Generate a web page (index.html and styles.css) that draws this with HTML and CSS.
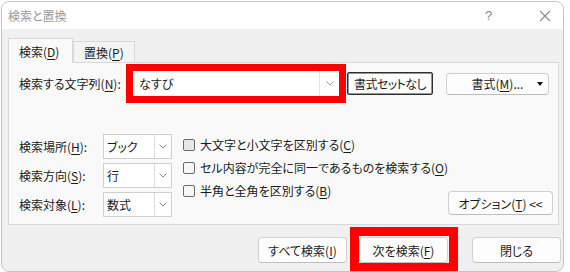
FILE: index.html
```html
<!DOCTYPE html>
<html lang="ja">

<head>
    <meta charset="UTF-8">
    <meta name="viewport" content="width=device-width, initial-scale=1.0">
    <title>検索と置換</title>
    <link rel="stylesheet" href="styles.css">
</head>

<body>
    <div class="window">
        <div class="titlebar">
            <span class="title">検索と置換</span>
            <span class="help">?</span>
            <span class="close">
                <svg width="12" height="12" viewBox="0 0 12 12"><path d="M1 1L11 11M11 1L1 11" stroke="#8a8a8a" stroke-width="1.1" fill="none"/></svg>
            </span>
        </div>

        <div class="content">
            <div class="tabs">
                <div class="tab active">検索(<u>D</u>)</div>
                <div class="tab">置換(<u>P</u>)</div>
            </div>

            <div class="panel">
                <div class="find-row">
                    <label class="find-label">検索する文字列(<u>N</u>):</label>
                    <div class="mark mark-input">
                        <div class="combo combo-find">
                            <span class="combo-value">なすび</span>
                            <span class="combo-arrow">
                                <svg width="8" height="5" viewBox="0 0 8 5"><path d="M0.5 0.5L4 4L7.5 0.5" stroke="#9a9a9a" fill="none"/></svg>
                            </span>
                        </div>
                    </div>
                    <button class="btn btn-focus">書式セットなし</button>
                    <button class="btn btn-format">
                        <span></span>
                        <span>書式(<u>M</u>)...</span>
                        <span class="tri"></span>
                    </button>
                </div>

                <div class="options">
                    <div class="selects">
                        <div class="select-row">
                            <label class="select-label">検索場所(<u>H</u>):</label>
                            <div class="combo combo-small">
                                <span class="combo-value">ブック</span>
                                <span class="combo-arrow">
                                    <svg width="8" height="5" viewBox="0 0 8 5"><path d="M0.5 0.5L4 4L7.5 0.5" stroke="#8a8a8a" fill="none"/></svg>
                                </span>
                            </div>
                        </div>
                        <div class="select-row">
                            <label class="select-label">検索方向(<u>S</u>):</label>
                            <div class="combo combo-small">
                                <span class="combo-value">行</span>
                                <span class="combo-arrow">
                                    <svg width="8" height="5" viewBox="0 0 8 5"><path d="M0.5 0.5L4 4L7.5 0.5" stroke="#8a8a8a" fill="none"/></svg>
                                </span>
                            </div>
                        </div>
                        <div class="select-row">
                            <label class="select-label">検索対象(<u>L</u>):</label>
                            <div class="combo combo-small">
                                <span class="combo-value">数式</span>
                                <span class="combo-arrow">
                                    <svg width="8" height="5" viewBox="0 0 8 5"><path d="M0.5 0.5L4 4L7.5 0.5" stroke="#8a8a8a" fill="none"/></svg>
                                </span>
                            </div>
                        </div>
                    </div>

                    <div class="checks">
                        <label class="check-row"><span class="box box-hover"></span>大文字と小文字を区別する(<u>C</u>)</label>
                        <label class="check-row"><span class="box"></span>セル内容が完全に同一であるものを検索する(<u>O</u>)</label>
                        <label class="check-row"><span class="box"></span>半角と全角を区別する(<u>B</u>)</label>
                    </div>

                    <button class="btn btn-option">オプション(<u>T</u>) &lt;&lt;</button>
                </div>
            </div>

            <div class="footer">
                <button class="btn btn-foot">すべて検索(<u>I</u>)</button>
                <div class="mark mark-button">
                    <button class="btn btn-foot">次を検索(<u>F</u>)</button>
                </div>
                <button class="btn btn-foot btn-close">閉じる</button>
            </div>
        </div>
    </div>
</body>

</html>
```

FILE: styles.css
```css
body {
    margin: 0;
    height: 272px;
    overflow: hidden;
    background-color: #ffffff;
    font-family: "Noto Sans CJK JP", "Noto Sans", sans-serif;
    font-size: 12px;
    font-feature-settings: "palt";
    color: #1a1a1a;
}

u {
    text-decoration-thickness: 1px;
    text-underline-offset: 2px;
}

.window {
    margin: 1px 0 0 1px;
    width: 563px;
    height: 271px;
    box-sizing: border-box;
    border: 1px solid #c4c4c4;
    border-radius: 8px;
    background-color: #f0f0f0;
    overflow: hidden;
}

.titlebar {
    height: 27px;
    display: flex;
    align-items: center;
    background-color: #ffffff;
    padding-left: 6px;
    color: #9a9a9a;
}

.title {
    flex: 1;
}

.help {
    width: 12px;
    margin-right: 42px;
    font-family: "Liberation Sans", sans-serif;
    font-size: 13px;
    color: #8a8a8a;
}

.close {
    width: 12px;
    height: 12px;
    margin-right: 12px;
    display: flex;
}

.content {
    padding: 9px 0 0 6px;
}

/* tabs */
.tabs {
    display: flex;
    align-items: flex-end;
    height: 24px;
}

.tab {
    box-sizing: border-box;
    height: 21px;
    padding: 0 10px;
    display: flex;
    align-items: center;
    border: 1px solid #d9d9d9;
    border-bottom: none;
    background-color: #f4f4f4;
}

.tab.active {
    height: 25px;
    width: 65px;
    margin-bottom: -1px;
    padding-left: 10px;
    background-color: #f9f9f9;
    position: relative;
    z-index: 1;
}

.panel {
    margin-right: 4px;
    box-sizing: border-box;
    height: 163px;
    border: 1px solid #d9d9d9;
    background-color: #f9f9f9;
    padding: 1px 8px 0 10px;
}

/* find row */
.find-row {
    display: flex;
    align-items: center;
}

.find-label {
    width: 107px;
    white-space: nowrap;
}

.mark {
    border: solid #ff0000;
}

.mark-input {
    border-width: 7px;
}

.combo {
    box-sizing: border-box;
    display: flex;
    align-items: center;
    background-color: #ffffff;
}

.combo-find {
    width: 206px;
    height: 25px;
}

.combo-find .combo-value {
    flex: 1;
    padding-left: 6px;
}

.combo-find .combo-arrow {
    width: 19px;
    height: 100%;
    border-left: 1px solid #e4e4e4;
    display: flex;
    align-items: center;
    justify-content: center;
}

.btn {
    box-sizing: border-box;
    font-family: inherit;
    font-size: 12px;
    font-feature-settings: "palt";
    color: #1a1a1a;
    background-color: #fdfdfd;
    border: 1px solid #d0d0d0;
    border-bottom-color: #bdbdbd;
    border-radius: 4px;
    padding: 0;
    white-space: nowrap;
    cursor: pointer;
}

.btn-focus {
    margin-left: 1px;
    width: 86px;
    height: 23px;
    border: 1px solid #2e2e2e;
    border-radius: 2px;
    box-shadow: inset 0 0 0 0.5px #2e2e2e;
    letter-spacing: -0.6px;
}

.btn-format {
    margin-left: 13px;
    width: 103px;
    height: 22px;
    display: grid;
    grid-template-columns: 1fr auto 1fr;
    align-items: center;
}

.tri {
    justify-self: end;
    margin-right: 5px;
    width: 0;
    height: 0;
    border-left: 3.5px solid transparent;
    border-right: 3.5px solid transparent;
    border-top: 4px solid #111111;
}

/* options */
.options {
    margin-top: 31px;
    display: flex;
}

.selects {
    flex-shrink: 0;
    display: flex;
    flex-direction: column;
    gap: 4px;
}

.select-row {
    display: flex;
    align-items: center;
}

.select-label {
    width: 84px;
    white-space: nowrap;
}

.combo-small {
    width: 69px;
    height: 25px;
    border: 1px solid #cfcfcf;
}

.combo-small .combo-value {
    flex: 1;
    padding-left: 3px;
}

.combo-small .combo-arrow {
    width: 16px;
    height: 100%;
    border-left: 1px solid #dcdcdc;
    display: flex;
    align-items: center;
    justify-content: center;
}

.checks {
    flex-shrink: 0;
    margin-left: 11px;
    margin-top: -1px;
    display: flex;
    flex-direction: column;
}

.check-row {
    height: 23px;
    display: flex;
    align-items: center;
    white-space: nowrap;
}

.box {
    flex-shrink: 0;
    box-sizing: border-box;
    width: 12px;
    height: 12px;
    margin-right: 5px;
    border: 1px solid #6a6a6a;
    border-radius: 2px;
    background-color: #f7f7f7;
}

.box-hover {
    background-color: #e8e8e8;
}

.btn-option {
    flex-shrink: 0;
    margin-left: auto;
    align-self: flex-end;
    margin-bottom: 2px;
    width: 105px;
    height: 24px;
}

/* footer */
.footer {
    margin-top: 2px;
    padding-right: 2px;
    display: flex;
    justify-content: flex-end;
    align-items: flex-start;
}

.btn-foot {
    width: 89px;
    height: 26px;
    margin-top: 10px;
}

.mark-button {
    margin-left: 3px;
    border-width: 9px;
    padding: 1px 1px 0 0;
}

.mark-button .btn-foot {
    margin-top: 0;
}

.btn-close {
    margin-left: 14px;
}
```
